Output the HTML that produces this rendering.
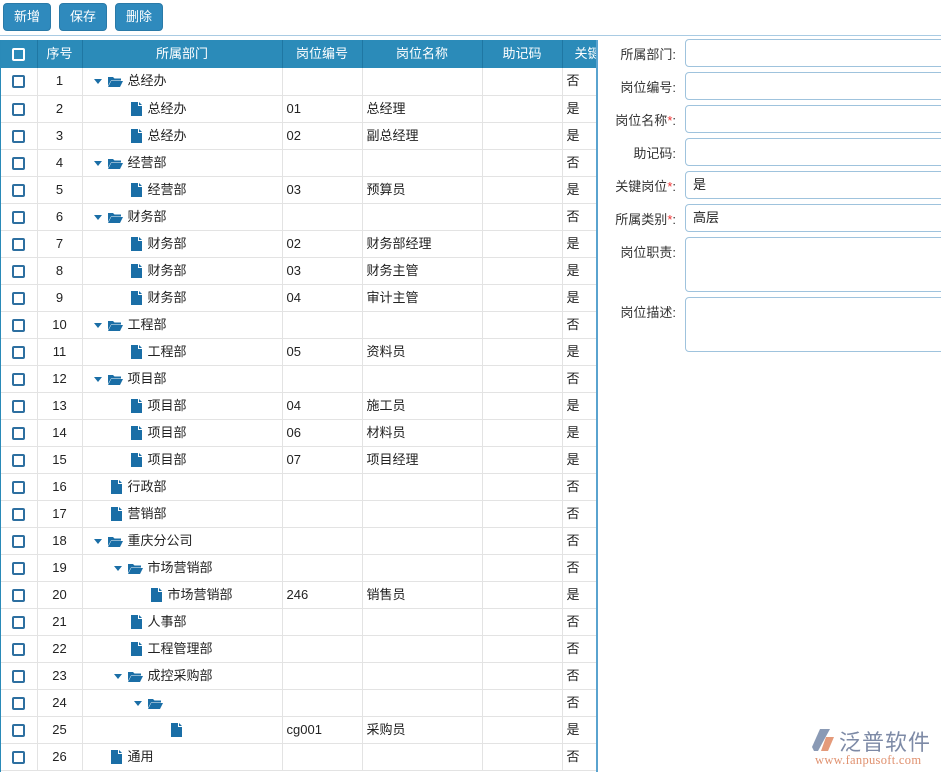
<!DOCTYPE html>
<html><head><meta charset="utf-8"><style>
*{box-sizing:border-box;margin:0;padding:0}
body{width:941px;height:772px;overflow:hidden;background:#fff;font-family:"Liberation Sans","Noto Sans CJK SC",sans-serif;font-size:13px;color:#222;position:relative}
.btn{position:absolute;top:3px;height:28px;background:#2f8abd;border:1px solid #2a7aa8;border-radius:4px;color:#fff;font-size:13px;line-height:26px;text-align:center}
.sep{position:absolute;left:0;top:35px;width:941px;height:1px;background:#a9cbe3}
.grid{position:absolute;left:0;top:40px;width:598px;height:732px;border-left:1px solid #2a8ab8;border-right:2px solid #5aa3cf;overflow:hidden}
table{border-collapse:collapse;table-layout:fixed;width:640px}
th{background:#2b8bb9;color:#fff;font-weight:normal;height:28px;line-height:18px;border-right:1px solid #1f77a3;text-align:center;white-space:nowrap;overflow:hidden}
td{height:27px;line-height:18px;border-right:1px solid #e3e3e3;border-bottom:1px solid #e3e3e3;padding-left:4px;position:relative;white-space:nowrap}
td.c{text-align:center;padding:0}
.cb{display:inline-block;width:13px;height:13px;border:2px solid #2d6fa0;border-radius:2px;vertical-align:middle;background:#fff}
th .cb{border-color:#fff;background:transparent}
.a{position:absolute;top:11px;width:0;height:0;border-left:4px solid transparent;border-right:4px solid transparent;border-top:5px solid #1a6ea6}
.fo{position:absolute;top:8px;width:15px;height:11px}
.fi{position:absolute;top:6px;width:11px;height:14px}
.t{position:absolute;top:4px;line-height:18px}
.lab{position:absolute;left:598px;width:78px;text-align:right;color:#333}
.lab i{color:#e33;font-style:normal}
.inp{position:absolute;left:685px;width:270px;border:1px solid #9fc3dd;border-radius:4px;padding-left:7px;line-height:26px;background:#fff}
</style></head><body>
<div class="btn" style="left:3px;width:48px">新增</div>
<div class="btn" style="left:59px;width:48px">保存</div>
<div class="btn" style="left:115px;width:48px">删除</div>
<div class="sep"></div>
<svg width="0" height="0" style="position:absolute"><defs>
<symbol id="fo" viewBox="0 0 15 11"><path d="M0 1h5l1.5 1.5H13v2H3L0 10z" fill="#1a6ea6"/><path d="M3.2 5H15L12 11H0z" fill="#1a6ea6"/></symbol>
<symbol id="fi" viewBox="0 0 11 14"><path d="M0 0h7v4h4v10H0z" fill="#1a6ea6"/><path d="M8 0l3 3H8z" fill="#1a6ea6"/></symbol>
</defs></svg>
<div class="grid"><table>
<colgroup><col style="width:36px"><col style="width:45px"><col style="width:200px"><col style="width:80px"><col style="width:120px"><col style="width:80px"><col style="width:79px"></colgroup>
<tr><th><span class="cb"></span></th><th>序号</th><th>所属部门</th><th>岗位编号</th><th>岗位名称</th><th>助记码</th><th style="text-align:left;padding-left:12px">关键岗位</th></tr>
<tr><td class="c"><span class="cb"></span></td><td class="c">1</td><td><span class="a" style="left:11px"></span><svg class="fo" style="left:25px"><use href="#fo"/></svg><span class="t" style="left:45px">总经办</span></td><td></td><td></td><td></td><td>否</td></tr>
<tr><td class="c"><span class="cb"></span></td><td class="c">2</td><td><svg class="fi" style="left:48px"><use href="#fi"/></svg><span class="t" style="left:65px">总经办</span></td><td>01</td><td>总经理</td><td></td><td>是</td></tr>
<tr><td class="c"><span class="cb"></span></td><td class="c">3</td><td><svg class="fi" style="left:48px"><use href="#fi"/></svg><span class="t" style="left:65px">总经办</span></td><td>02</td><td>副总经理</td><td></td><td>是</td></tr>
<tr><td class="c"><span class="cb"></span></td><td class="c">4</td><td><span class="a" style="left:11px"></span><svg class="fo" style="left:25px"><use href="#fo"/></svg><span class="t" style="left:45px">经营部</span></td><td></td><td></td><td></td><td>否</td></tr>
<tr><td class="c"><span class="cb"></span></td><td class="c">5</td><td><svg class="fi" style="left:48px"><use href="#fi"/></svg><span class="t" style="left:65px">经营部</span></td><td>03</td><td>预算员</td><td></td><td>是</td></tr>
<tr><td class="c"><span class="cb"></span></td><td class="c">6</td><td><span class="a" style="left:11px"></span><svg class="fo" style="left:25px"><use href="#fo"/></svg><span class="t" style="left:45px">财务部</span></td><td></td><td></td><td></td><td>否</td></tr>
<tr><td class="c"><span class="cb"></span></td><td class="c">7</td><td><svg class="fi" style="left:48px"><use href="#fi"/></svg><span class="t" style="left:65px">财务部</span></td><td>02</td><td>财务部经理</td><td></td><td>是</td></tr>
<tr><td class="c"><span class="cb"></span></td><td class="c">8</td><td><svg class="fi" style="left:48px"><use href="#fi"/></svg><span class="t" style="left:65px">财务部</span></td><td>03</td><td>财务主管</td><td></td><td>是</td></tr>
<tr><td class="c"><span class="cb"></span></td><td class="c">9</td><td><svg class="fi" style="left:48px"><use href="#fi"/></svg><span class="t" style="left:65px">财务部</span></td><td>04</td><td>审计主管</td><td></td><td>是</td></tr>
<tr><td class="c"><span class="cb"></span></td><td class="c">10</td><td><span class="a" style="left:11px"></span><svg class="fo" style="left:25px"><use href="#fo"/></svg><span class="t" style="left:45px">工程部</span></td><td></td><td></td><td></td><td>否</td></tr>
<tr><td class="c"><span class="cb"></span></td><td class="c">11</td><td><svg class="fi" style="left:48px"><use href="#fi"/></svg><span class="t" style="left:65px">工程部</span></td><td>05</td><td>资料员</td><td></td><td>是</td></tr>
<tr><td class="c"><span class="cb"></span></td><td class="c">12</td><td><span class="a" style="left:11px"></span><svg class="fo" style="left:25px"><use href="#fo"/></svg><span class="t" style="left:45px">项目部</span></td><td></td><td></td><td></td><td>否</td></tr>
<tr><td class="c"><span class="cb"></span></td><td class="c">13</td><td><svg class="fi" style="left:48px"><use href="#fi"/></svg><span class="t" style="left:65px">项目部</span></td><td>04</td><td>施工员</td><td></td><td>是</td></tr>
<tr><td class="c"><span class="cb"></span></td><td class="c">14</td><td><svg class="fi" style="left:48px"><use href="#fi"/></svg><span class="t" style="left:65px">项目部</span></td><td>06</td><td>材料员</td><td></td><td>是</td></tr>
<tr><td class="c"><span class="cb"></span></td><td class="c">15</td><td><svg class="fi" style="left:48px"><use href="#fi"/></svg><span class="t" style="left:65px">项目部</span></td><td>07</td><td>项目经理</td><td></td><td>是</td></tr>
<tr><td class="c"><span class="cb"></span></td><td class="c">16</td><td><svg class="fi" style="left:28px"><use href="#fi"/></svg><span class="t" style="left:45px">行政部</span></td><td></td><td></td><td></td><td>否</td></tr>
<tr><td class="c"><span class="cb"></span></td><td class="c">17</td><td><svg class="fi" style="left:28px"><use href="#fi"/></svg><span class="t" style="left:45px">营销部</span></td><td></td><td></td><td></td><td>否</td></tr>
<tr><td class="c"><span class="cb"></span></td><td class="c">18</td><td><span class="a" style="left:11px"></span><svg class="fo" style="left:25px"><use href="#fo"/></svg><span class="t" style="left:45px">重庆分公司</span></td><td></td><td></td><td></td><td>否</td></tr>
<tr><td class="c"><span class="cb"></span></td><td class="c">19</td><td><span class="a" style="left:31px"></span><svg class="fo" style="left:45px"><use href="#fo"/></svg><span class="t" style="left:65px">市场营销部</span></td><td></td><td></td><td></td><td>否</td></tr>
<tr><td class="c"><span class="cb"></span></td><td class="c">20</td><td><svg class="fi" style="left:68px"><use href="#fi"/></svg><span class="t" style="left:85px">市场营销部</span></td><td>246</td><td>销售员</td><td></td><td>是</td></tr>
<tr><td class="c"><span class="cb"></span></td><td class="c">21</td><td><svg class="fi" style="left:48px"><use href="#fi"/></svg><span class="t" style="left:65px">人事部</span></td><td></td><td></td><td></td><td>否</td></tr>
<tr><td class="c"><span class="cb"></span></td><td class="c">22</td><td><svg class="fi" style="left:48px"><use href="#fi"/></svg><span class="t" style="left:65px">工程管理部</span></td><td></td><td></td><td></td><td>否</td></tr>
<tr><td class="c"><span class="cb"></span></td><td class="c">23</td><td><span class="a" style="left:31px"></span><svg class="fo" style="left:45px"><use href="#fo"/></svg><span class="t" style="left:65px">成控采购部</span></td><td></td><td></td><td></td><td>否</td></tr>
<tr><td class="c"><span class="cb"></span></td><td class="c">24</td><td><span class="a" style="left:51px"></span><svg class="fo" style="left:65px"><use href="#fo"/></svg></td><td></td><td></td><td></td><td>否</td></tr>
<tr><td class="c"><span class="cb"></span></td><td class="c">25</td><td><svg class="fi" style="left:88px"><use href="#fi"/></svg></td><td>cg001</td><td>采购员</td><td></td><td>是</td></tr>
<tr><td class="c"><span class="cb"></span></td><td class="c">26</td><td><svg class="fi" style="left:28px"><use href="#fi"/></svg><span class="t" style="left:45px">通用</span></td><td></td><td></td><td></td><td>否</td></tr>
</table></div>
<div class="lab" style="top:44px">所属部门:</div><div class="inp" style="top:39px;height:28px"></div>
<div class="lab" style="top:77px">岗位编号:</div><div class="inp" style="top:72px;height:28px"></div>
<div class="lab" style="top:110px">岗位名称<i>*</i>:</div><div class="inp" style="top:105px;height:28px"></div>
<div class="lab" style="top:143px">助记码:</div><div class="inp" style="top:138px;height:28px"></div>
<div class="lab" style="top:176px">关键岗位<i>*</i>:</div><div class="inp" style="top:171px;height:28px">是</div>
<div class="lab" style="top:209px">所属类别<i>*</i>:</div><div class="inp" style="top:204px;height:28px">高层</div>
<div class="lab" style="top:242px">岗位职责:</div><div class="inp" style="top:237px;height:55px"></div>
<div class="lab" style="top:302px">岗位描述:</div><div class="inp" style="top:297px;height:55px"></div>
<div style="position:absolute;left:812px;top:726px;width:125px;height:42px">
<svg style="position:absolute;left:0;top:3px" width="26" height="22" viewBox="0 0 26 22"><path d="M8 0h10L12 11 6 22H2L0 18z" fill="#8a9ab5"/><path d="M14 8h8l-6 14H9z" fill="#e49a7a"/></svg>
<span style="position:absolute;left:27px;top:-1px;font-size:22px;color:#7d8aa6;letter-spacing:1px">泛普软件</span>
<span style="position:absolute;left:3px;top:27px;font-family:'Liberation Serif',serif;font-size:12.5px;color:#e0916f;letter-spacing:0.3px">www.fanpusoft.com</span>
</div>
</body></html>
